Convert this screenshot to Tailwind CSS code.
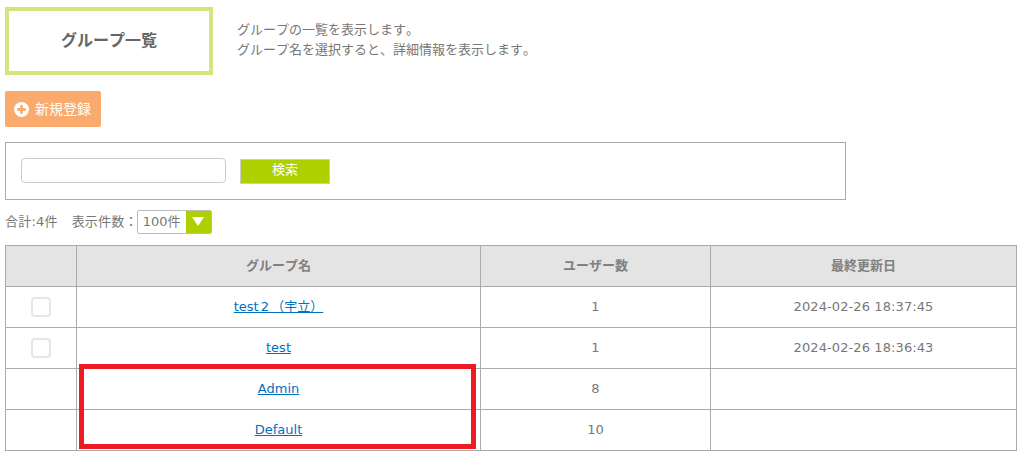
<!DOCTYPE html>
<html lang="ja">
<head>
  <meta charset="UTF-8" />
  <title>グループ一覧</title>
  <script src="https://cdn.jsdelivr.net/npm/@tailwindcss/browser@4"></script>
</head>
<body class="bg-white text-[#777] text-[13px] [font-kerning:none] font-['DejaVu_Sans','Noto_Sans_CJK_JP',sans-serif]">
  <div class="relative w-[1028px] h-[461px] overflow-hidden px-[5px] pt-[7px]">

    <!-- 見出し -->
    <div class="flex items-center">
      <div class="w-[208px] h-[68px] border-4 border-[#d5e47c] flex items-center justify-center text-base font-bold text-[#666]">グループ一覧</div>
      <p class="ml-[24px] leading-[20px] -mt-[2px]">グループの一覧を表示します。<br />グループ名を選択すると、詳細情報を表示します。</p>
    </div>

    <!-- 新規登録 -->
    <button class="mt-[16px] w-[96px] h-[36px] rounded-[2px] bg-[#f9aa6c] text-white text-sm flex items-center justify-center gap-[6px]">
      <svg class="w-[15px] h-[15px] -ml-[1px]" viewBox="0 0 16 16"><circle cx="8" cy="8" r="8" fill="#fff" /><path d="M8 3.5v9M3.5 8h9" stroke="#f9aa6c" stroke-width="3" /></svg>
      <span class="-mt-[1px]">新規登録</span>
    </button>

    <!-- 検索 -->
    <div class="mt-[15px] w-[841px] h-[58px] border border-[#aaa] flex items-center pl-[15px]">
      <input type="text" class="w-[205px] h-[25px] -mt-[2px] border border-[#ccc] rounded-[4px] bg-white" />
      <button class="ml-[14px] w-[90px] h-[25px] pb-[2px] bg-[#aecf00] border border-[#ccc] text-white">検索</button>
    </div>

    <!-- 件数 -->
    <div class="mt-[10px] h-[24px] flex items-center">
      <span class="tracking-[0.2px]">合計:4件</span>
      <span class="ml-[14px] tracking-[0.2px]">表示件数：</span>
      <div class="-ml-[1px] w-[75px] h-[24px] border border-[#bbb] rounded-[2px] flex items-center overflow-hidden">
        <span class="flex-1 pl-[5px]">100件</span>
        <span class="w-[25px] h-full bg-[#aecf00] flex items-center justify-center">
          <svg class="w-[14px] h-[10px]" viewBox="0 0 14 10"><path d="M1 0h12L7 9z" fill="#fff" /></svg>
        </span>
      </div>
    </div>

    <!-- 一覧 -->
    <table class="mt-[11px] w-[1011px] table-fixed border-collapse text-center">
      <colgroup>
        <col class="w-[71px]" /><col class="w-[404px]" /><col class="w-[230px]" /><col class="w-[306px]" />
      </colgroup>
      <thead>
        <tr class="h-[41px] bg-[#e4e4e4] text-[#808080]">
          <th class="border border-[#aaa] font-bold"></th>
          <th class="border border-[#aaa] font-bold">グループ名</th>
          <th class="border border-[#aaa] font-bold">ユーザー数</th>
          <th class="border border-[#aaa] font-bold">最終更新日</th>
        </tr>
      </thead>
      <tbody>
        <tr class="h-[41px]">
          <td class="border border-[#aaa]"><span class="block mx-auto w-[20px] h-[20px] border-2 border-[#e6e6e6] rounded-[4px]"></span></td>
          <td class="border border-[#aaa]"><a href="#" class="text-[#0070c0] underline [word-spacing:-2px]">test 2 （宇立）</a></td>
          <td class="border border-[#aaa]">1</td>
          <td class="border border-[#aaa] tracking-[0.1px]">2024-02-26 18:37:45</td>
        </tr>
        <tr class="h-[41px]">
          <td class="border border-[#aaa]"><span class="block mx-auto w-[20px] h-[20px] border-2 border-[#e6e6e6] rounded-[4px]"></span></td>
          <td class="border border-[#aaa]"><a href="#" class="text-[#0070c0] underline">test</a></td>
          <td class="border border-[#aaa]">1</td>
          <td class="border border-[#aaa] tracking-[0.1px]">2024-02-26 18:36:43</td>
        </tr>
        <tr class="h-[41px]">
          <td class="border border-[#aaa]"></td>
          <td class="border border-[#aaa]"><a href="#" class="text-[#0070c0] underline">Admin</a></td>
          <td class="border border-[#aaa]">8</td>
          <td class="border border-[#aaa]"></td>
        </tr>
        <tr class="h-[41px]">
          <td class="border border-[#aaa]"></td>
          <td class="border border-[#aaa]"><a href="#" class="text-[#0070c0] underline">Default</a></td>
          <td class="border border-[#aaa]">10</td>
          <td class="border border-[#aaa]"></td>
        </tr>
      </tbody>
    </table>

    <!-- 赤枠の注記 -->
    <div class="absolute left-[79px] top-[364px] w-[397px] h-[85px] border-[5px] border-[#ed1c24]"></div>
  </div>
</body>
</html>
